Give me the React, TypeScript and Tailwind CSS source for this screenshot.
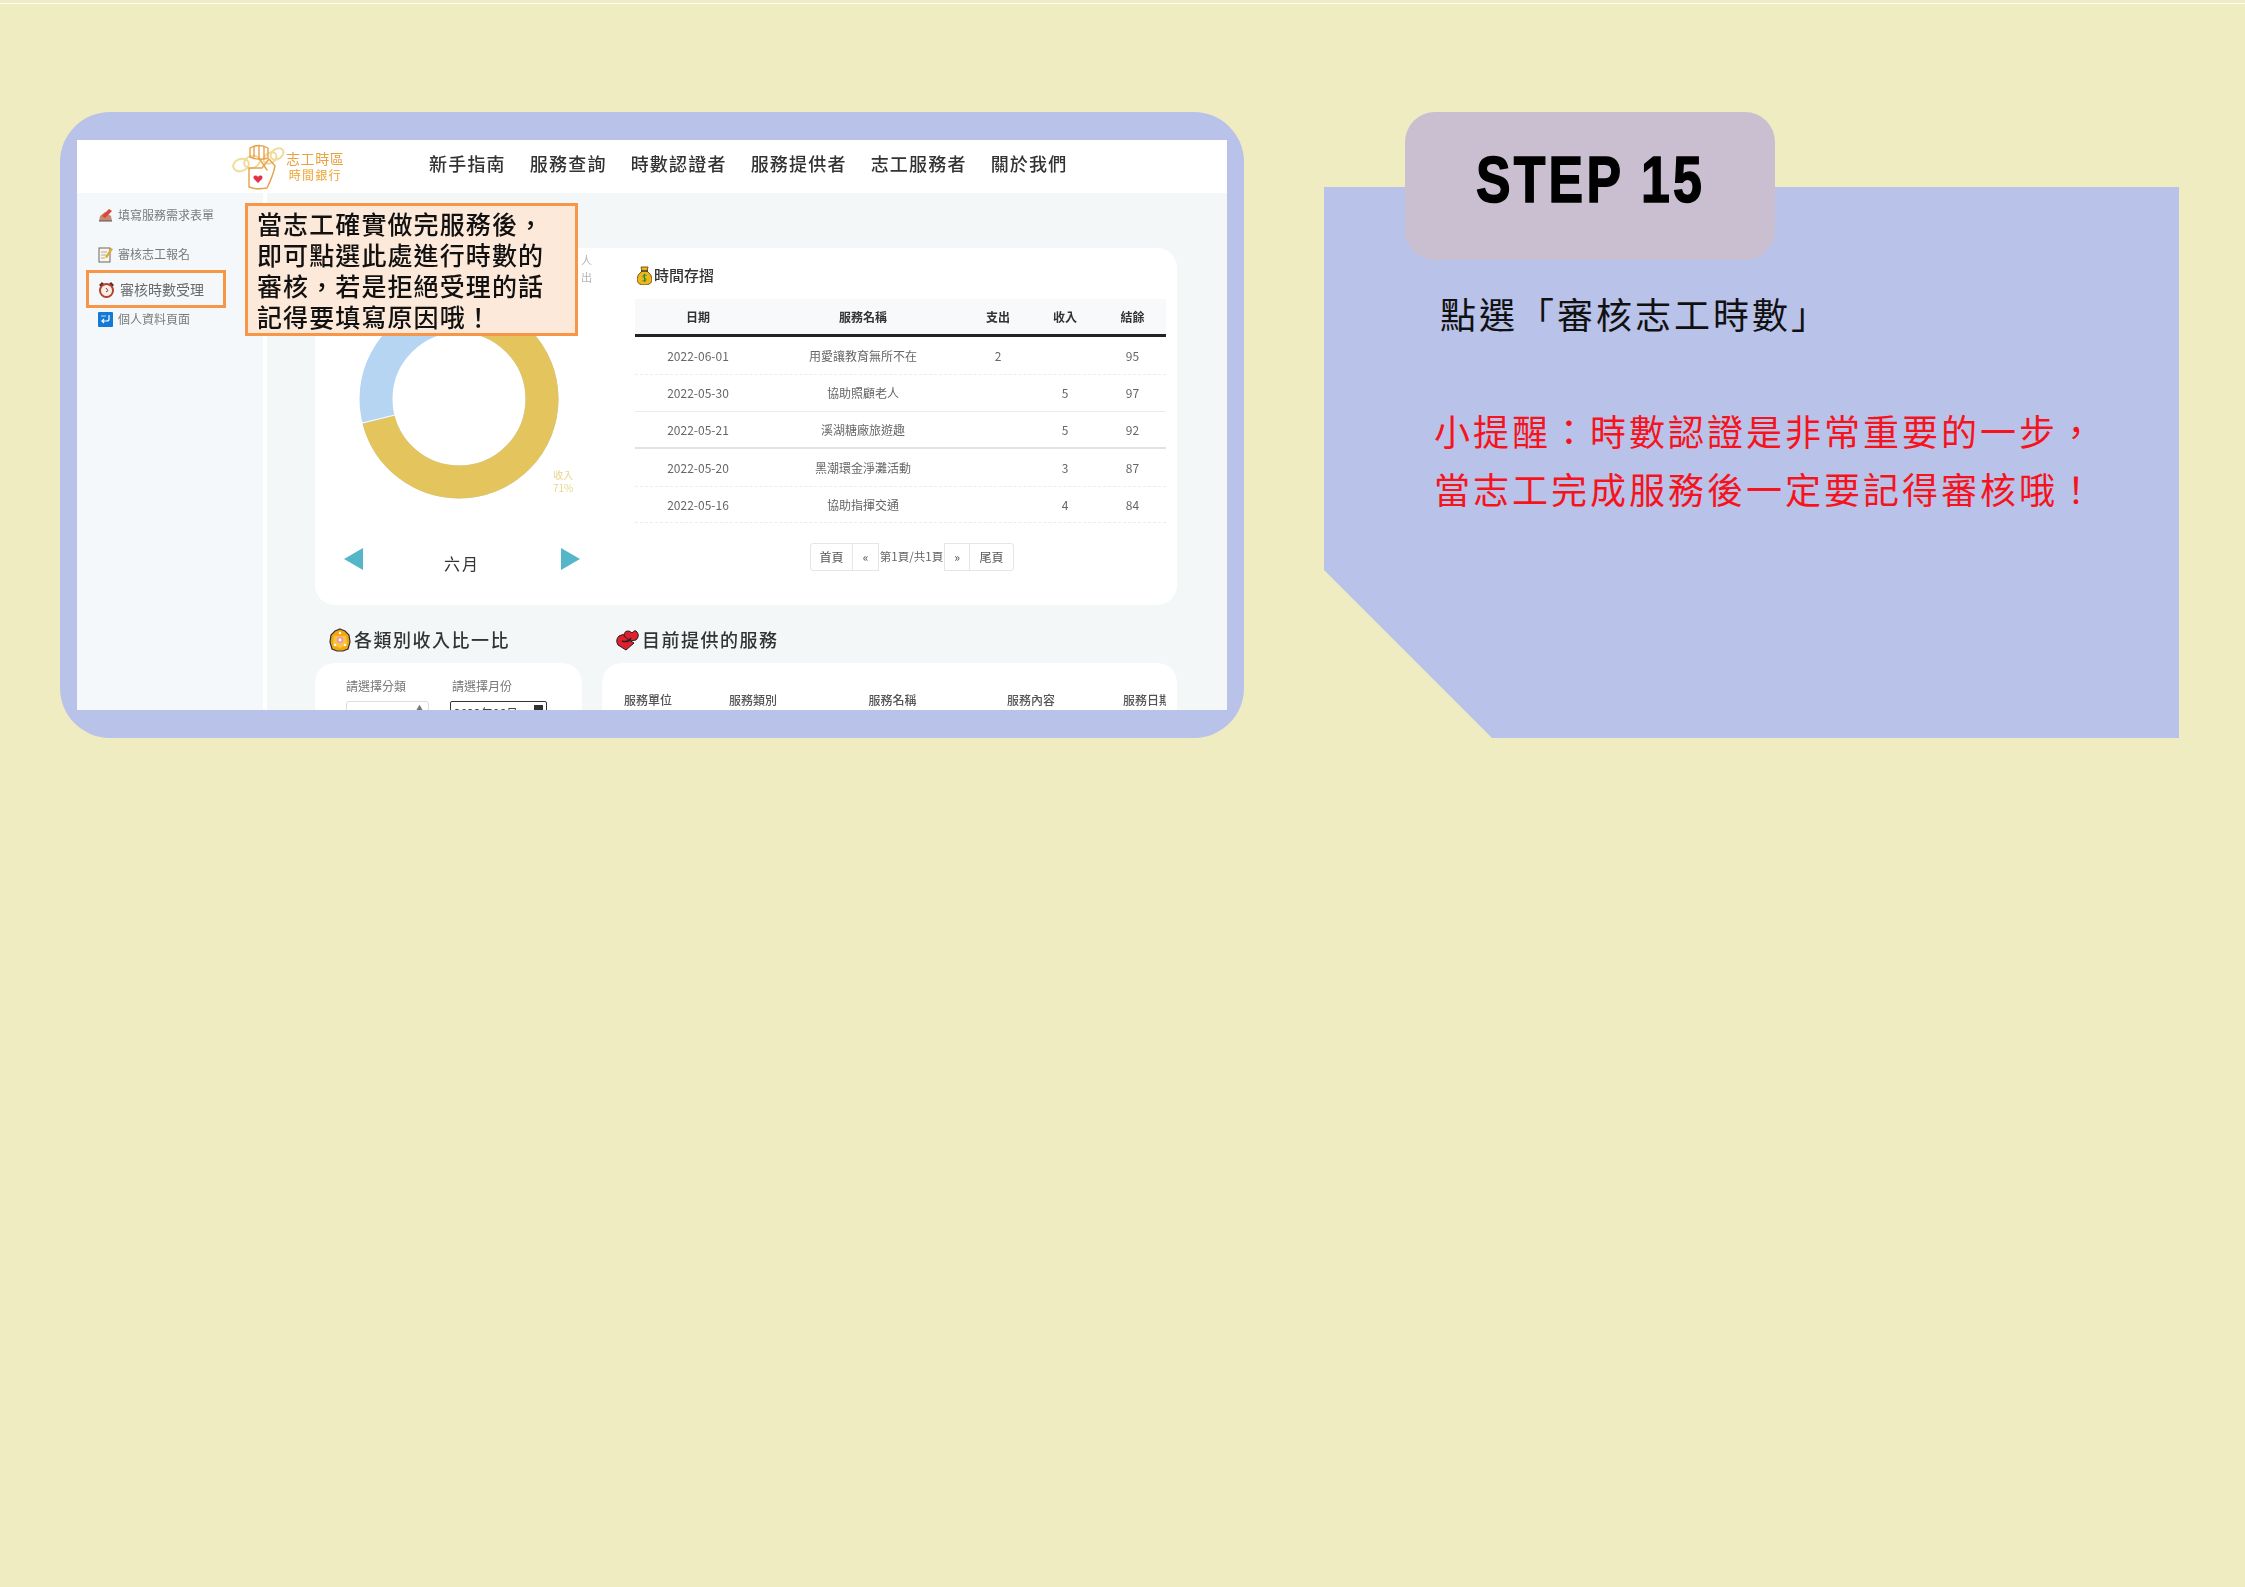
import React from "react";

const CJK = "font-['Noto_Sans_CJK_TC','Noto_Sans_CJK_SC',sans-serif]";

function Logo() {
  return (
    <svg width="54" height="46" viewBox="0 0 54 46" fill="none" strokeLinecap="round" strokeLinejoin="round">
      <g stroke="#efdc9a" strokeWidth="2">
        <ellipse cx="9" cy="21" rx="8" ry="6" transform="rotate(-20 9 21)" />
        <ellipse cx="20" cy="18" rx="8" ry="6" transform="rotate(-20 20 18)" />
        <ellipse cx="38" cy="14" rx="7" ry="5" transform="rotate(-35 38 14)" />
        <ellipse cx="45" cy="10" rx="7" ry="5" transform="rotate(-35 45 10)" />
      </g>
      <g stroke="#e8a24a" strokeWidth="1.4">
        <path d="M18 4 Q27 -1 36 4 L36 14 Q27 17 18 13 Z" />
        <path d="M22 3 V13 M27 2 V14 M32 3 V14" />
        <path d="M17 24 L17 43 Q25 46 35 44 Q41 32 43 22 L37 15 L30 24 Z" />
        <path d="M27 14 L35 26" />
      </g>
      <path d="M26 33 c-2-3-6-1-4 2 l4 4 4-4 c2-3-2-5-4-2 Z" fill="#e0334a" />
    </svg>
  );
}

function PencilIcon() {
  return (
    <svg width="15" height="14" viewBox="0 0 15 14">
      <path d="M1 13 L2 8 L7 4 L13 8 L14 13 Z" fill="#c98a72" />
      <path d="M4 8 L11 1 L14 3 L7 10 Z" fill="#d9453a" />
      <path d="M1 13 H14" stroke="#555" strokeWidth="1" />
    </svg>
  );
}
function NoteIcon() {
  return (
    <svg width="15" height="17" viewBox="0 0 15 17">
      <rect x="1" y="2" width="11" height="14" fill="#fbf6e6" stroke="#666" />
      <path d="M3 6 H9 M3 9 H8 M3 12 H7" stroke="#aaa" />
      <path d="M7 11 L13 2 L15 3 L9 12 Z" fill="#e5a52e" />
    </svg>
  );
}
function ClockIcon() {
  return (
    <svg width="17" height="17" viewBox="0 0 17 17">
      <path d="M1 4 L4 1 L6 3 L3 6 Z M16 4 L13 1 L11 3 L14 6 Z" fill="#5a2b22" />
      <circle cx="8.5" cy="9.5" r="6.5" fill="#f8efe6" stroke="#b83f32" strokeWidth="2" />
      <path d="M8 7 L10 9.5 L8 11" stroke="#7a3b2c" fill="none" />
    </svg>
  );
}
function ReturnIcon() {
  return (
    <svg width="15" height="15" viewBox="0 0 15 15">
      <rect width="15" height="15" rx="1" fill="#1579d6" />
      <path d="M11 3 V7 Q11 9 9 9 H4 M6 7 L4 9 L6 11" stroke="#fff" strokeWidth="1.2" fill="none" />
      <path d="M3 4 H8" stroke="#9cd0f5" strokeWidth="1.2" />
    </svg>
  );
}
function BagIcon() {
  return (
    <svg width="15" height="19" viewBox="0 0 15 19">
      <path d="M4 1 H11 L10 5 Q15 9 15 13 Q15 19 7.5 19 Q0 19 0 13 Q0 9 5 5 Z" fill="#efb61c" stroke="#7a5a10" strokeWidth="1" />
      <path d="M4 5 H11" stroke="#333" strokeWidth="1.4" />
      <path d="M9.5 9.5 Q7.5 8 6 9.5 Q5.5 11.5 7.5 12 Q9.5 12.5 9 14.5 Q7.5 16 5.5 14.5 M7.5 8 V16" stroke="#2f8f3a" strokeWidth="1" fill="none" />
    </svg>
  );
}
function FlowerIcon() {
  return (
    <svg width="22" height="24" viewBox="0 0 22 24">
      <path d="M11 1 L16 3 L20 7 L21 14 L19 21 L14 23 H8 L3 21 L1 14 L2 7 L6 3 Z" fill="#f7a511" stroke="#333" strokeWidth="1.2" />
      <path d="M5 8 H17 L18 17 L11 20 L4 17 Z" fill="#f5c93d" />
      <circle cx="11" cy="12" r="3.5" fill="#ef9aa8" />
      <circle cx="11" cy="12" r="1.4" fill="#fff" />
      <circle cx="6" cy="17" r="1.2" fill="#fff" />
      <circle cx="16" cy="17" r="1.2" fill="#fff" />
      <circle cx="11" cy="5" r="1.2" fill="#fff" />
    </svg>
  );
}
function HeartsIcon() {
  return (
    <svg width="23" height="22" viewBox="0 0 23 22">
      <path d="M10 21 L2 16 Q-1 11 3 7 Q7 4 10 7 L13 11 L18 14 Z" fill="#e0202e" stroke="#222" strokeWidth="1" />
      <path d="M14 12 L8 7 Q8 2 12 2 Q14 2 16 4 Q19 0 21 3 Q24 7 20 11 Z" fill="#e0202e" stroke="#222" strokeWidth="1" />
      <path d="M6 12 Q12 14 15 9" stroke="#222" strokeWidth="1.5" fill="none" />
    </svg>
  );
}

function Donut() {
  return (
    <svg width="200" height="200" viewBox="0 0 200 200">
      <circle cx="100" cy="100" r="83" fill="none" stroke="#b6d5f3" strokeWidth="33" />
      <circle
        cx="100"
        cy="100"
        r="83"
        fill="none"
        stroke="#e4c45c"
        strokeWidth="33"
        pathLength="100"
        strokeDasharray="71 29"
        transform="rotate(-90 100 100)"
      />
      <path d="M3 124 L36 116" stroke="#fff" strokeWidth="1" />
    </svg>
  );
}

const rows = [
  { d: "2022-06-01", n: "用愛讓教育無所不在", o: "2", i: "", b: "95", c: "h-[38px] border-b border-dashed border-[#ececec]" },
  { d: "2022-05-30", n: "協助照顧老人", o: "", i: "5", b: "97", c: "h-[37px] border-b border-[#ececec]" },
  { d: "2022-05-21", n: "溪湖糖廠旅遊趣", o: "", i: "5", b: "92", c: "h-[37px] border-b-2 border-[#e2e2e2]" },
  { d: "2022-05-20", n: "黑潮環金淨灘活動", o: "", i: "3", b: "87", c: "h-[38px] border-b border-dashed border-[#ececec]" },
  { d: "2022-05-16", n: "協助指揮交通", o: "", i: "4", b: "84", c: "h-[36px] border-b border-dashed border-[#ececec]" },
];

const COLS = "grid grid-cols-[126px_204px_66px_68px_67px] items-center text-center";

function PageBtn({ w, children, cls = "" }: { w: string; children: React.ReactNode; cls?: string }) {
  return (
    <div className={`${w} h-full flex items-center justify-center border border-[#e6e6e6] text-[#555] ${cls}`}>{children}</div>
  );
}

function Screenshot() {
  return (
    <div className={`relative w-[1150px] h-[570px] overflow-hidden bg-[#f4f7f8] ${CJK} blur-[0.4px]`}>
      <header className="h-[53px] bg-white flex items-center pl-[155px]">
        <div className="flex items-center w-[197px]">
          <Logo />
          <div className="flex flex-col items-center leading-none -mt-px">
            <span className="text-[14px] tracking-[0.6px] text-[#e9a23f]">志工時區</span>
            <span className="text-[12px] mt-[4px] tracking-[1.2px] font-medium text-[#eeb253]">時間銀行</span>
          </div>
        </div>
        <nav className="flex gap-[24px] text-[18px] tracking-[1.2px] text-[#333] font-medium -mt-[6px]">
          <span>新手指南</span>
          <span>服務查詢</span>
          <span>時數認證者</span>
          <span>服務提供者</span>
          <span>志工服務者</span>
          <span>關於我們</span>
        </nav>
      </header>
      <div className="flex h-[517px]">
        <aside className="w-[186px] bg-[#f4f8fa] pl-[9px] pt-[10px] text-[12px] text-[#7a7a7a] flex flex-col">
          <div className="h-[24px] flex items-center pl-[12px] gap-[5px]">
            <PencilIcon />
            <span>填寫服務需求表單</span>
          </div>
          <div className="h-[24px] mt-[15px] flex items-center pl-[12px] gap-[5px]">
            <NoteIcon />
            <span>審核志工報名</span>
          </div>
          <div className="w-[140px] h-[38px] mt-[4px] border-[3px] border-[#f79646] flex items-center pl-[9px] gap-[5px] text-[14px] text-[#6a6a6a]">
            <ClockIcon />
            <span>審核時數受理</span>
          </div>
          <div className="h-[22px] flex items-center pl-[12px] gap-[5px]">
            <ReturnIcon />
            <span>個人資料頁面</span>
          </div>
        </aside>
        <div className="w-[4px] bg-white" />
        <main className="flex-1 pl-[48px] pr-[50px] pt-[55px]">
          <section className="relative h-[357px] bg-white rounded-[20px] flex">
            <div className="w-[320px] pl-[44px] pt-[51px]">
              <Donut />
              <div className="-ml-[15px] mt-[49px] w-[236px] flex items-start justify-between">
                <div className="w-0 h-0 border-y-[11px] border-y-transparent border-r-[19px] border-r-[#56b6c9]" />
                <span className="text-[16px] tracking-[2px] leading-[24px] text-[#333] pt-[3px]">六月</span>
                <div className="w-0 h-0 border-y-[11px] border-y-transparent border-l-[19px] border-l-[#56b6c9]" />
              </div>
            </div>
            <span className="absolute left-[266px] top-[4px] text-[11px] text-[#b5b5b5]">人</span>
            <span className="absolute left-[266px] top-[21px] text-[11px] text-[#b5b5b5]">出</span>
            <span className="absolute left-[238px] top-[220px] text-[10px] leading-[13px] text-[#e8d48a] text-center">
              收入
              <br />
              71%
            </span>
            <div className="w-[531px] pt-[17px]">
              <div className="h-[20px] flex items-center gap-[2px] pl-[2px] text-[15px] font-medium text-[#333]">
                <BagIcon />
                <span>時間存摺</span>
              </div>
              <div className={`${COLS} mt-[14px] h-[38px] bg-[#f8f9fa] border-b-[3px] border-[#222] text-[12px] font-bold text-[#333]`}>
                <span>日期</span>
                <span>服務名稱</span>
                <span>支出</span>
                <span>收入</span>
                <span>結餘</span>
              </div>
              {rows.map((r) => (
                <div key={r.d} className={`${COLS} ${r.c} text-[12px] text-[#666]`}>
                  <span>{r.d}</span>
                  <span>{r.n}</span>
                  <span>{r.o}</span>
                  <span>{r.i}</span>
                  <span>{r.b}</span>
                </div>
              ))}
              <div className="ml-[175px] mt-[20px] h-[28px] flex items-center text-[12px]">
                <PageBtn w="w-[43px]" cls="rounded-l-[3px]">首頁</PageBtn>
                <PageBtn w="w-[27px]" cls="-ml-px text-[12px]">«</PageBtn>
                <div className="w-[65px] text-center text-[#666] whitespace-nowrap text-[11.5px]">第1頁/共1頁</div>
                <PageBtn w="w-[26px]" cls="text-[12px]">»</PageBtn>
                <PageBtn w="w-[45px]" cls="-ml-px rounded-r-[3px]">尾頁</PageBtn>
              </div>
            </div>
          </section>
          <div className="grid grid-cols-[267px_575px] gap-x-[20px] mt-[23px]">
            <div className="h-[24px] pl-[14px] flex items-center gap-[3px] text-[18px] tracking-[1.5px] font-medium text-[#333]">
              <FlowerIcon />
              <span className="-mt-[2px]">各類別收入比一比</span>
            </div>
            <div className="h-[24px] pl-[14px] flex items-center gap-[3px] text-[18px] tracking-[1.5px] font-medium text-[#333]">
              <HeartsIcon />
              <span className="-mt-[2px]">目前提供的服務</span>
            </div>
            <div className="mt-[11px] h-[120px] bg-white rounded-[20px] pl-[31px] pt-[15px] text-[12px] text-[#777]">
              <div className="flex">
                <span className="w-[106px] h-[16px] leading-[16px]">請選擇分類</span>
                <span className="h-[16px] leading-[16px]">請選擇月份</span>
              </div>
              <div className="flex mt-[7px]">
                <div className="w-[83px] h-[26px] border border-[#ddd] rounded-[3px] flex justify-end pr-[4px] text-[9px]">▲</div>
                <div className="ml-[21px] w-[97px] h-[26px] border border-[#333] rounded-[2px] px-[3px] pt-[2px] flex justify-between text-[#444]">
                  <span>2022年06月</span>
                  <span className="w-[9px] h-[9px] mt-[1px] bg-[#333]" />
                </div>
              </div>
            </div>
            <div className="mt-[11px] h-[120px] bg-white rounded-[20px] pl-[14px] pr-[11px] pt-[29px] text-[12px] font-medium text-[#555] overflow-hidden">
              <div className="grid grid-cols-[64px_146px_133px_144px_63px] text-center h-[16px] leading-[16px]">
                <span>服務單位</span>
                <span>服務類別</span>
                <span>服務名稱</span>
                <span>服務內容</span>
                <span className="pl-[20px] text-left whitespace-nowrap overflow-hidden">服務日期</span>
              </div>
            </div>
          </div>
        </main>
      </div>
      <div className="absolute left-[168px] top-[63px] w-[333px] h-[133px] border-[3px] border-[#f79646] bg-[#fde9d9] pl-[9px] pt-[2px] text-[25px] leading-[31px] tracking-[1.1px] font-medium text-[#111] whitespace-nowrap">
        <div>當志工確實做完服務後，</div>
        <div>即可點選此處進行時數的</div>
        <div>審核，若是拒絕受理的話</div>
        <div>記得要填寫原因哦！</div>
      </div>
    </div>
  );
}

export default function App() {
  return (
    <div className={`w-[2245px] h-[1587px] overflow-hidden bg-[#f0ecc1] ${CJK}`}>
      <div className="h-[3px]" />
      <div className="h-px bg-white" />
      <div className="flex pl-[60px] pt-[108px]">
        <div className="w-[1184px] h-[626px] rounded-[50px] bg-[#b9c2e8] pl-[17px] pt-[28px]">
          <Screenshot />
        </div>
        <div className="relative ml-[80px] w-[855px] h-[626px]">
          <div className="mt-[75px] h-[551px] bg-[#b9c2e8] [clip-path:polygon(0_0,100%_0,100%_100%,168px_100%,0_383px)] absolute left-0 right-0 top-0" />
          <div className="relative pt-[181px] pl-[116px] text-[36px] leading-[40px] tracking-[3px] text-[#111]">
            <div>點選「審核志工時數」</div>
          </div>
          <div className="relative pl-[110px] mt-[68px] text-[36px] leading-[58px] tracking-[3px] text-[#f5141e] whitespace-nowrap">
            <div>小提醒：時數認證是非常重要的一步，</div>
            <div>當志工完成服務後一定要記得審核哦！</div>
          </div>
          <div className="absolute left-[81px] top-0 w-[370px] h-[148px] rounded-[30px] bg-[#c9bfd0] flex justify-center pt-[32px]">
            <span className="font-['Liberation_Sans',sans-serif] font-bold text-[64px] leading-[72px] tracking-[4px] text-black scale-x-[0.81] [-webkit-text-stroke:1.5px_black]">
              STEP 15
            </span>
          </div>
        </div>
      </div>
    </div>
  );
}
